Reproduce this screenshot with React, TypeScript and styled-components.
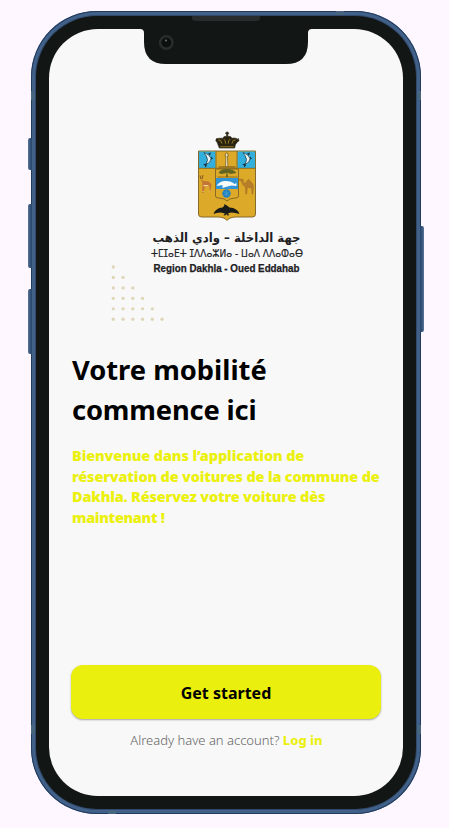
import React from "react";
import styled, { createGlobalStyle } from "styled-components";

const GlobalStyle = createGlobalStyle`
  html, body { margin: 0; padding: 0; background: #fef7ff; }
  * { box-sizing: border-box; }
  body { font-family: "Noto Sans", "Open Sans", sans-serif; overflow: hidden; }
`;

const Page = styled.main`
  width: 449px;
  height: 828px;
  padding: 11px 0 0 31px;
  background: #fef7ff;
`;

const Phone = styled.div`
  position: relative;
  width: 390px;
  height: 803px;
  padding: 5px;
  border-radius: 66px;
  background: #426188;
  box-shadow: inset 0 0 0 1px #213b5f;
`;

const Bezel = styled.div`
  position: relative;
  width: 100%;
  height: 100%;
  padding: 13px;
  border-radius: 61px;
  background: #121715;
  box-shadow: 0 0 0 1px #30496c;
`;

const Screen = styled.div`
  display: flex;
  flex-direction: column;
  width: 354px;
  height: 767px;
  padding: 98px 22px 0;
  border-radius: 49px;
  background: #f8f8f8;
`;

const SideKey = styled.i<{ $side: "left" | "right"; $top: number; $height: number }>`
  position: absolute;
  ${(p) => p.$side}: -3px;
  top: ${(p) => p.$top}px;
  width: 4px;
  height: ${(p) => p.$height}px;
  border-radius: ${(p) => (p.$side === "left" ? "2px 0 0 2px" : "0 2px 2px 0")};
  background: linear-gradient(${(p) => (p.$side === "left" ? "to right" : "to left")}, #5d7799 0, #36557d 2px, #29466d 4px);
`;

const Antenna = styled.i<{ $x: number; $y: number; $flat?: boolean }>`
  position: absolute;
  left: ${(p) => p.$x}px;
  top: ${(p) => p.$y}px;
  width: ${(p) => (p.$flat ? 8 : 5)}px;
  height: ${(p) => (p.$flat ? 5 : 9)}px;
  background: #48657f;
`;

const Notch = styled.svg`
  position: absolute;
  left: 106px;
  top: 4px;
`;

const Brand = styled.svg`
  display: block;
  flex: none;
  width: 200px;
  height: 200px;
  margin-left: 35px;
  overflow: visible;
`;

const Heading = styled.h1`
  margin: 23px 0 0 1px;
  font-size: 27.3px;
  line-height: 40px;
  font-weight: 700;
  color: #000;
  white-space: nowrap;
`;

const Line = styled.span<{ $spacing?: number }>`
  display: block;
  letter-spacing: ${(p) => p.$spacing ?? 0}px;
`;

const Intro = styled.p`
  margin: 15px 0 0 1px;
  font-size: 14.5px;
  line-height: 20.7px;
  font-weight: 900;
  color: #ebf00e;
  white-space: nowrap;
`;

const StartButton = styled.button`
  flex: none;
  width: 310px;
  height: 54px;
  margin-top: 137px;
  padding: 1px 0 0;
  border: 0;
  border-radius: 12px;
  background: #ebef0e;
  box-shadow: 0 1px 2px rgba(0, 0, 0, 0.35);
  font: 700 16px/54px "Noto Sans", sans-serif;
  color: #000;
`;

const Account = styled.p`
  margin: 11px 0 0;
  padding-left: 1px;
  text-align: center;
  font-size: 13px;
  line-height: 20px;
  font-weight: 300;
  color: #666;
  white-space: nowrap;
`;

const Login = styled.a`
  font-weight: 800;
  color: #ebf00e;
`;

const dots = [0, 1, 2, 3, 4, 5].flatMap((row) =>
  Array.from({ length: row + 1 }, (_, col) => ({ x: 7.3 + col * 9.75, y: 140 + row * 10.45 }))
);

function Fish({ x, y }: { x: number; y: number }) {
  return (
    <g transform={`translate(${x} ${y})`}>
      <path d="M-4 5Q1 3 1-1Q0-5-6-7Q-5-5-4-4Q-1 0-4 5Z" fill="#eef5f5" stroke="#25404b" strokeWidth=".8" />
      <path d="M-4 4L-7 5L-5 6L-5 8L-3 6ZM1-3L3-1L1 0M-2-6L1-7L0-4" fill="#173440" />
    </g>
  );
}

function Logo() {
  return (
    <Brand viewBox="0 0 200 200">
      {dots.map((d, i) => <circle key={i} cx={d.x} cy={d.y} r="1.65" fill="#dfd6b9" />)}
      <g transform="translate(.5 1)">
        <g transform="translate(12 3) scale(.9)">
          <g fill="#292311" stroke="#292311" strokeWidth=".6">
            <path d="M112 19L110 14Q107 8 112 8L116 8Q117 5 120 6L120 3L119 3V2H120V1H121.5V2H122.5V3H121.5V6Q125 5 126 8Q130 7 132 9Q134 11 130 15L129 19Z" />
            <path d="M109 8l-1 3 3 1zM133 8l1 3-3 1z" />
          </g>
          <path d="M111 10q3-1 4 4M117 9q2 1 2 5M124 9q-2 1-2 5M130 10q-3-1-4 4M113 17.5h15" fill="none" stroke="#a68624" strokeWidth="1" />
        </g>
        <path d="M92 23H149V86Q149 89 146 89H130Q123 89 120.5 92.5Q118 89 111 89H95Q92 89 92 86Z" fill="#dda928" stroke="#796020" strokeWidth=".9" />
        <path d="M92.5 23.5H109V40H92.5ZM131 23.5H148.5V40H131Z" fill="#32afdc" />
        <path d="M92 40.3H149M109.5 23V40M130.5 23V40" stroke="#796020" strokeWidth=".8" />
        <Fish x={103.5} y={31.5} />
        <Fish x={142.5} y={31.5} />
        <path d="M119 39l.4-11h-1l1-3h1.5l1 3h-1l.5 11z" fill="#efe5bb" stroke="#58451b" strokeWidth=".6" />
        <path d="M112 39h17" stroke="#8b6a22" strokeWidth="1.4" />
        <path d="M109 41H132V68Q132 70 129 70Q123 70 120.5 73Q118 70 112 70Q109 70 109 68Z" fill="#dda928" stroke="#806321" strokeWidth=".9" />
        <path d="M112 45Q114 41 120 41Q127 41 130 45L124 46L121 44.5L121.5 49H119.5L120 45L115 46Z" fill="#626522" />
        <path d="M111 49H131" stroke="#806321" strokeWidth=".8" />
        <path d="M109.5 50H131.5V61H109.5Z" fill="#3094d7" />
        <path d="M110 58Q113 53 119 53Q125 53 128 56L130 55L130 58L125 57.5L119 59L116 60L116 57Z" fill="#f7fbfa" />
        <circle cx="120" cy="65.5" r="4.2" fill="#237fbe" />
        <path d="M117 63.5l6 4m-6 0l6-4M120 61.5v7" stroke="#4fa8cd" strokeWidth=".6" />
        <path d="M95.5 65L96 55L94 51L97 53L102 53.5L105 56L104 64L103.3 64L103 58.5L98.5 58.5L97 65Z" fill="#c47535" />
        <path d="M97 57.7h5M96 63.5h1M103 63h1" stroke="#f4d59b" strokeWidth="1.2" />
        <path d="M94.5 51l-1-3.5m2 3.5l1-4" stroke="#55351d" strokeWidth=".7" />
        <path d="M133 51L136.5 51.2L137.2 55Q139 56 140.5 53Q142.5 50 144 53.5Q147 55 147 59L146.4 66H145.4L145 60L140.8 59.5L140.3 66H139.3L138.8 59L136 56.5L135 53L133 52.5Z" fill="#b87d29" stroke="#8d6025" strokeWidth=".3" />
        <path d="M107 86Q109 80 116 79.5Q118 79 118 76Q121 77.5 123 79.5Q131 80 133 86Q129 84.5 125 84.5Q122 84.5 121 86Q124 86 122 87.5Q120 87.5 120 86Q118 88.5 117 87Q118 86 119 86Q117 84.5 114 84.5Q110 84.5 107 86Z" fill="#191b19" />
      </g>
      <g fill="#20201f" textAnchor="middle">
        <text x="120.5" y="115" direction="rtl" fontFamily="DejaVu Sans, sans-serif" fontWeight="700" fontSize="12.5" textLength="148" lengthAdjust="spacingAndGlyphs">جهة الداخلة – وادي الذهب</text>
        <text x="121" y="130" fontFamily="DejaVu Sans, sans-serif" fontSize="10.5" stroke="#20201f" strokeWidth=".2" textLength="152" lengthAdjust="spacingAndGlyphs">ⵜⵎⵊⴰⴹⵜ ⵊⴷⴷⴰⵣⵍⴰ - ⵡⴰⴷ ⴷⴷⴰⵀⴰⴱ</text>
        <text x="120.5" y="145" fontFamily="Liberation Sans, sans-serif" fontWeight="700" fontSize="10.5" stroke="#20201f" strokeWidth=".25" textLength="146" lengthAdjust="spacingAndGlyphs">Region Dakhla - Oued Eddahab</text>
      </g>
    </Brand>
  );
}

export default function App() {
  return (
    <>
      <GlobalStyle />
      <Page>
        <Phone>
          <SideKey $side="left" $top={127} $height={32} />
          <SideKey $side="left" $top={193} $height={64} />
          <SideKey $side="left" $top={278} $height={65} />
          <SideKey $side="right" $top={215} $height={106} />
          <Antenna $x={0} $y={80} />
          <Antenna $x={385} $y={80} />
          <Antenna $x={0} $y={714} />
          <Antenna $x={385} $y={714} />
          <Antenna $x={305} $y={0} $flat />
          <Antenna $x={77} $y={798} $flat />
          <Bezel>
            <Screen>
              <Logo />
              <Heading>
                <Line>Votre mobilité</Line>
                <Line $spacing={-0.15}>commence ici</Line>
              </Heading>
              <Intro>
                <Line $spacing={-0.14}>Bienvenue dans l’application de</Line>
                <Line $spacing={-0.18}>réservation de voitures de la commune de</Line>
                <Line $spacing={-0.19}>Dakhla. Réservez votre voiture dès</Line>
                <Line $spacing={-0.35}>maintenant !</Line>
              </Intro>
              <StartButton>Get started</StartButton>
              <Account>Already have an account? <Login>Log in</Login></Account>
            </Screen>
          </Bezel>
          <Notch width="178" height="52" viewBox="0 0 178 52">
            <path d="M2 14H3Q7 14 7 18V27Q7 49 29 49H149Q171 49 171 27V18Q171 14 175 14H177V5H2Z" fill="#121715" />
            <path d="M55 1H123V3Q123 6 119 6H59Q55 6 55 3Z" fill="#292c2c" />
            <circle cx="29.3" cy="27.5" r="6.2" fill="#0c100f" stroke="#292d2c" strokeWidth="2.5" />
            <circle cx="29" cy="25.5" r=".9" fill="#77817d" />
          </Notch>
        </Phone>
      </Page>
    </>
  );
}
